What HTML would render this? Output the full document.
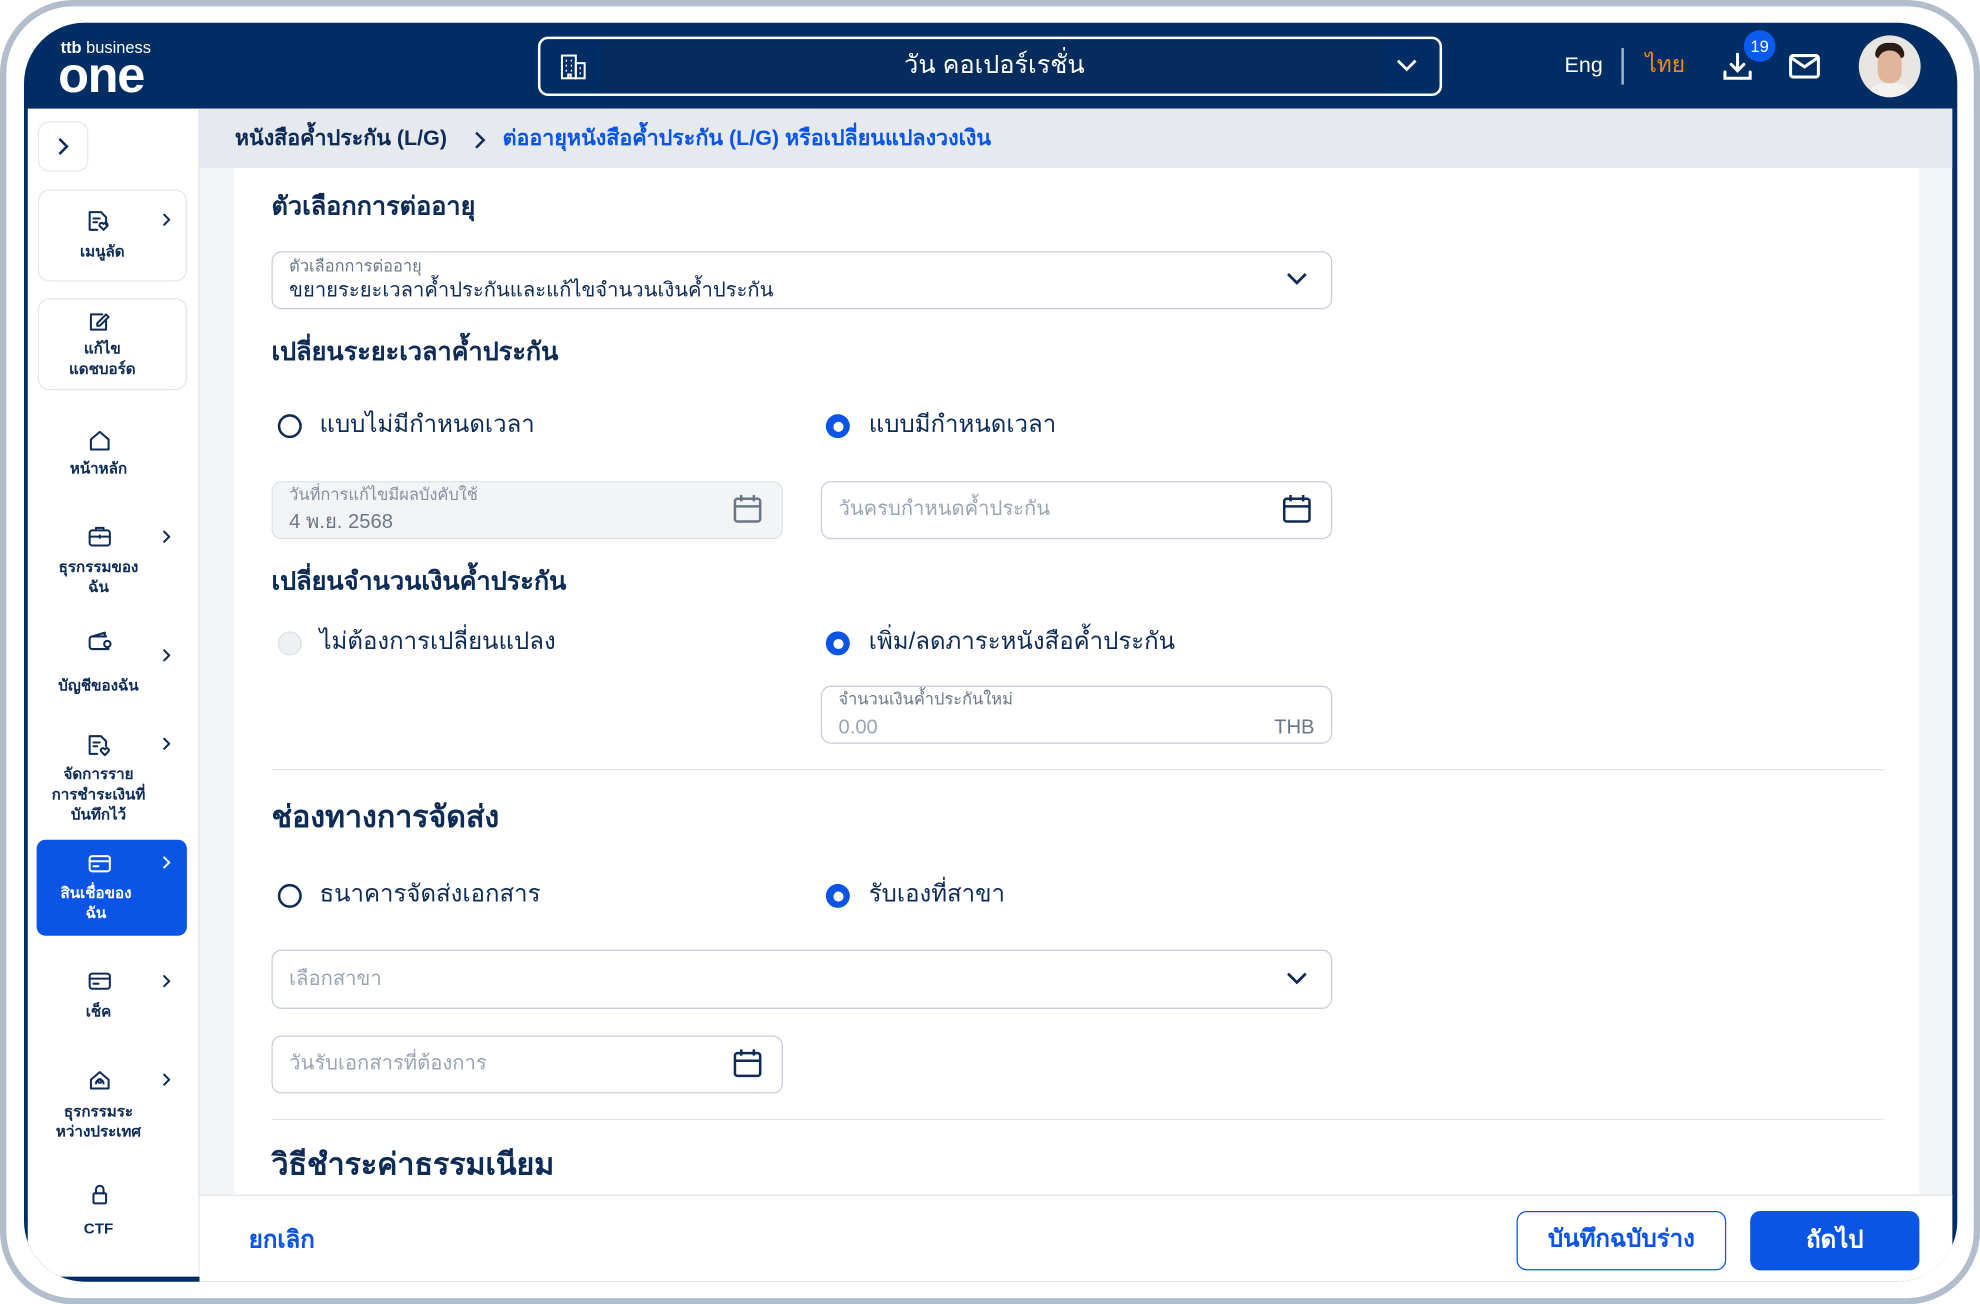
<!DOCTYPE html>
<html><head><meta charset="utf-8"><style>
*{margin:0;padding:0;box-sizing:border-box}
html,body{width:1980px;height:1304px;overflow:hidden;background:#fff}
body{font-family:"Liberation Sans","DejaVu Sans",sans-serif;color:#0d2b57}
#w{position:absolute;left:0;top:0;width:1568px;height:1033px;transform:scale(1.26276);transform-origin:0 0}
.a{position:absolute}
.outer{left:0;top:0;width:1568px;height:1033px;border:5px solid #b3becd;border-radius:58px;background:#fff}
.frame{left:19px;top:18px;width:1531px;height:997px;border-radius:48px;background:#002d63;overflow:hidden}
.t{position:absolute;white-space:nowrap;line-height:1}
.sb{position:absolute;left:3px;top:68px;width:136px;height:925px;background:#fff;border-right:1px solid #e3e7ec}
.card{position:absolute;border:1.5px solid #e3e8ef;border-radius:9px}
.lbl{position:absolute;width:100px;left:9px;text-align:center;font-size:12px;font-weight:bold;line-height:16px;color:#0d2b57}
.ico{position:absolute;left:49px}
.chev{position:absolute;left:106px}
.h{font-weight:bold;font-size:20px}
.box{position:absolute;border:1.5px solid #c6ced9;border-radius:8px;background:#fff}
.rad{position:absolute;width:19px;height:19px;border-radius:50%;border:2.5px solid #0d2b57}
.rads{position:absolute;width:19px;height:19px;border-radius:50%;background:#0a55e6}
.rads:after{content:"";position:absolute;left:5.5px;top:5.5px;width:8px;height:8px;border-radius:50%;background:#fff}
.rt{font-size:19px}
.ph{color:#9aa5b4;font-size:16px}
.sm{color:#6b7787;font-size:13px}
</style></head><body><div id="w">
<div class="a outer"></div>
<div class="a frame">
 <!-- header -->
 <div class="t" style="left:29px;top:13px;color:#fff;font-size:13px;font-weight:bold">ttb <span style="font-weight:normal">business</span></div>
 <div class="t" style="left:27px;top:22px;color:#fff;font-size:40px;font-weight:bold;letter-spacing:-1px">one</div>
 <div class="a" style="left:407px;top:11px;width:716px;height:47px;border:2px solid #fff;border-radius:8px"></div>
 <div class="a" style="left:459px;top:15px;width:617px;height:39px;background:#062c5e"></div>
 <svg class="a" style="left:424px;top:24px" width="22" height="22" viewBox="0 0 22 22" fill="none" stroke="#fff" stroke-width="1.6"><rect x="2" y="2" width="11" height="18"/><rect x="13" y="8" width="7" height="12"/><path d="M5 6h1M9 6h1M5 10h1M9 10h1M5 14h1M9 14h1M16 12h1M16 16h1M7 20v-3h2v3"/></svg>
 <div class="t" style="left:697px;top:24px;color:#fff;font-size:20px">วัน คอเปอร์เรชั่น</div>
 <svg class="a" style="left:1085px;top:26px" width="20" height="14" viewBox="0 0 20 14" fill="none" stroke="#fff" stroke-width="2.2"><path d="M3 4l7 7 7-7"/></svg>
 <div class="t" style="left:1220px;top:25px;color:#fff;font-size:17px">Eng</div>
 <div class="a" style="left:1265px;top:20px;width:2px;height:29px;background:#9fb0c8"></div>
 <div class="t" style="left:1284px;top:24px;color:#f08a1c;font-size:18px">ไทย</div>
 <svg class="a" style="left:1344px;top:22px" width="26" height="26" viewBox="0 0 26 26" fill="none" stroke="#fff" stroke-width="2.4" stroke-linecap="round"><path d="M13 3v13M8 11l5 5 5-5M3 17v5h20v-5"/></svg>
 <div class="a" style="left:1362px;top:6px;width:25px;height:25px;border-radius:50%;background:#0a5cf0;color:#fff;font-size:13px;text-align:center;line-height:25px">19</div>
 <svg class="a" style="left:1397px;top:24px" width="26" height="22" viewBox="0 0 26 22" fill="none" stroke="#fff" stroke-width="2.4"><rect x="2" y="2" width="22" height="17" rx="2"/><path d="M3 4l10 7 10-7"/></svg>
 <div class="a" style="left:1453px;top:10px;width:49px;height:49px;border-radius:50%;background:#e8e6e2;overflow:hidden"><div class="a" style="left:13px;top:6px;width:23px;height:12px;border-radius:10px 10px 3px 3px;background:#2a1d16"></div><div class="a" style="left:15px;top:12px;width:19px;height:26px;border-radius:9px;background:#e2b59a"></div><div class="a" style="left:8px;top:38px;width:33px;height:14px;border-radius:10px 10px 0 0;background:#f4f2ee"></div></div>
 <!-- sidebar -->
 <div class="sb">
  <div class="card" style="left:8px;top:10px;width:40px;height:40px"></div>
  <svg class="a" style="left:20px;top:22px" width="16" height="16" viewBox="0 0 16 16" fill="none" stroke="#0d2b57" stroke-width="2"><path d="M5 2l6 6-6 6"/></svg>
  <div class="card" style="left:8px;top:64px;width:118px;height:73px"></div>
  <div class="card" style="left:8px;top:150px;width:118px;height:73px"></div>
 </div>
 <svg width="136" height="930" class="a" style="left:3px;top:68px" fill="none" stroke="#0d2b57" stroke-width="1.6" stroke-linecap="round" stroke-linejoin="round">
  <g><path d="M49 82h9l4 4v6M49 82v14h6M52 87h5M52 90h3"/><path d="M60 96l-3-3a1.6 1.6 0 013-1.6 1.6 1.6 0 013 1.6z"/></g>
  <path d="M108 84l4 4-4 4"/>
  <g><path d="M59 163h-9v12h12v-7M55 170l7-7 2 2-7 7h-2z"/></g>
  <path d="M50 262l7-6 7 6v8h-14z"/>
  <g><rect x="49" y="334" width="16" height="12" rx="2"/><path d="M54 334v-2h6v2M49 339h16M57 338v2"/></g><path d="M108 335l4 4-4 4"/>
  <g><path d="M64 428h-13a2 2 0 01-2-2v-6a2 2 0 012-2h11M51 418l10-3v3"/><circle cx="63" cy="424" r="2.5"/></g><path d="M108 429l4 4-4 4"/>
  <g><path d="M49 497h9l4 4v4M49 497v14h6M52 502h5M52 505h3"/><path d="M61 512l-3-3a1.6 1.6 0 013-1.6 1.6 1.6 0 013 1.6z"/></g><path d="M108 499l4 4-4 4"/>
  <g><rect x="49" y="685" width="16" height="12" rx="2"/><path d="M49 689h16M52 693h4"/></g><path d="M108 687l4 4-4 4"/>
  <g><path d="M50 769l7-6 7 6v7h-14zM54 772a3 3 0 016 0"/><circle cx="57" cy="770" r="1.5"/></g><path d="M108 765l4 4-4 4"/>
  <g><rect x="52" y="859" width="10" height="8" rx="1"/><path d="M54 859v-3a3 3 0 016 0v3"/></g>
 </svg>
 <div class="a" style="left:10px;top:647px;width:119px;height:76px;background:#0a55e6;border-radius:7px"></div>
 <svg class="a" style="left:3px;top:68px" width="136" height="720" fill="none" stroke="#fff" stroke-width="1.6" stroke-linecap="round"><rect x="49" y="592" width="16" height="12" rx="2"/><path d="M49 596h16M52 600h4M108 593l4 4-4 4"/></svg>
 <div class="lbl" style="left:12px;top:173px">เมนูลัด</div>
 <div class="lbl" style="left:12px;top:250px">แก้ไข<br>แดชบอร์ด</div>
 <div class="lbl" style="left:9px;top:345px">หน้าหลัก</div>
 <div class="lbl" style="left:9px;top:423px">ธุรกรรมของ<br>ฉัน</div>
 <div class="lbl" style="left:9px;top:517px">บัญชีของฉัน</div>
 <div class="lbl" style="left:9px;top:587px">จัดการราย<br>การชำระเงินที่<br>บันทึกไว้</div>
 <div class="lbl" style="left:7px;top:681px;color:#fff">สินเชื่อของ<br>ฉัน</div>
 <div class="lbl" style="left:9px;top:775px">เช็ค</div>
 <div class="lbl" style="left:9px;top:854px">ธุรกรรมระ<br>หว่างประเทศ</div>
 <div class="lbl" style="left:9px;top:947px">CTF</div>
 <!-- main -->
 <div class="a" style="left:139px;top:68px;width:1388px;height:925px;background:#f3f5f7"></div>
 <div class="a" style="left:139px;top:68px;width:1388px;height:47px;background:#e6eaef"></div>
 <div class="t" style="left:167px;top:83px;font-size:17px;font-weight:bold">หนังสือค้ำประกัน (L/G)</div>
 <svg class="a" style="left:355px;top:85px" width="12" height="16" fill="none" stroke="#0d2b57" stroke-width="2"><path d="M3 2l6 6-6 6"/></svg>
 <div class="t" style="left:379px;top:83px;font-size:17px;font-weight:bold;color:#0a55e6">ต่ออายุหนังสือค้ำประกัน (L/G) หรือเปลี่ยนแปลงวงเงิน</div>
 <div class="a" style="left:167px;top:115px;width:1334px;height:820px;background:#fff"></div>
 <div class="t h" style="left:196px;top:136px">ตัวเลือกการต่ออายุ</div>
 <div class="box" style="left:196px;top:181px;width:840px;height:46px"></div>
 <div class="t sm" style="left:210px;top:186px">ตัวเลือกการต่ออายุ</div>
 <div class="t" style="left:210px;top:205px;font-size:16px">ขยายระยะเวลาค้ำประกันและแก้ไขจำนวนเงินค้ำประกัน</div>
 <svg class="a" style="left:998px;top:196px" width="20" height="14" fill="none" stroke="#0d2b57" stroke-width="2.2"><path d="M3 3l7 7 7-7"/></svg>
 <div class="t h" style="left:196px;top:251px">เปลี่ยนระยะเวลาค้ำประกัน</div>
 <div class="rad" style="left:201px;top:310px"></div><div class="t rt" style="left:234px;top:309px">แบบไม่มีกำหนดเวลา</div>
 <div class="rads" style="left:635px;top:310px"></div><div class="t rt" style="left:669px;top:309px">แบบมีกำหนดเวลา</div>
 <div class="box" style="left:196px;top:363px;width:405px;height:46px;background:#f3f4f6;border-color:#dde2e8"></div>
 <div class="t sm" style="left:210px;top:367px;color:#8590a0">วันที่การแก้ไขมีผลบังคับใช้</div>
 <div class="t" style="left:210px;top:388px;font-size:16px;color:#6b7787">4 พ.ย. 2568</div>
 <div class="box" style="left:631px;top:363px;width:405px;height:46px"></div>
 <div class="t ph" style="left:645px;top:378px">วันครบกำหนดค้ำประกัน</div>
 <div class="t h" style="left:196px;top:433px">เปลี่ยนจำนวนเงินค้ำประกัน</div>
 <div class="a" style="left:201px;top:482px;width:19px;height:19px;border-radius:50%;background:#eef0f3;border:1.5px solid #dde2e8"></div><div class="t rt" style="left:234px;top:481px">ไม่ต้องการเปลี่ยนแปลง</div>
 <div class="rads" style="left:635px;top:482px"></div><div class="t rt" style="left:669px;top:481px">เพิ่ม/ลดภาระหนังสือค้ำประกัน</div>
 <div class="box" style="left:631px;top:525px;width:405px;height:46px"></div>
 <div class="t sm" style="left:645px;top:529px">จำนวนเงินค้ำประกันใหม่</div>
 <div class="t" style="left:645px;top:551px;font-size:16px;color:#9aa5b4">0.00</div>
 <div class="t" style="left:990px;top:551px;font-size:16px;color:#6b7787">THB</div>
 <div class="a" style="left:196px;top:591px;width:1277px;height:1px;background:#e1e5ea"></div>
 <div class="t" style="left:196px;top:618px;font-size:24px;font-weight:bold">ช่องทางการจัดส่ง</div>
 <div class="rad" style="left:201px;top:682px"></div><div class="t rt" style="left:234px;top:681px">ธนาคารจัดส่งเอกสาร</div>
 <div class="rads" style="left:635px;top:682px"></div><div class="t rt" style="left:669px;top:681px">รับเองที่สาขา</div>
 <div class="box" style="left:196px;top:734px;width:840px;height:47px"></div>
 <div class="t ph" style="left:210px;top:750px">เลือกสาขา</div>
 <svg class="a" style="left:998px;top:750px" width="20" height="14" fill="none" stroke="#0d2b57" stroke-width="2.2"><path d="M3 3l7 7 7-7"/></svg>
 <div class="box" style="left:196px;top:802px;width:405px;height:46px"></div>
 <div class="t ph" style="left:210px;top:817px">วันรับเอกสารที่ต้องการ</div>
 <div class="a" style="left:196px;top:868px;width:1277px;height:1px;background:#e1e5ea"></div>
 <div class="t" style="left:196px;top:893px;font-size:24px;font-weight:bold">วิธีชำระค่าธรรมเนียม</div>
 <svg class="a" style="left:0;top:0" width="1100" height="850" fill="none" stroke-width="2" stroke-linejoin="round">
  <g stroke="#6b7787"><rect x="563" y="377" width="20" height="18" rx="2"/><path d="M563 383h20M568 374v5M578 374v5"/></g>
  <g stroke="#0d2b57"><rect x="998" y="377" width="20" height="18" rx="2"/><path d="M998 383h20M1003 374v5M1013 374v5"/></g>
  <g stroke="#0d2b57"><rect x="563" y="816" width="20" height="18" rx="2"/><path d="M563 822h20M568 813v5M578 813v5"/></g>
 </svg>
 <!-- footer -->
 <div class="a" style="left:139px;top:928px;width:1388px;height:70px;background:#fff;border-top:1px solid #e1e5ea"></div>
 <div class="t" style="left:178px;top:955px;font-size:19px;font-weight:bold;color:#0a55e6">ยกเลิก</div>
 <div class="a" style="left:1182px;top:941px;width:166px;height:47px;border:1.5px solid #0a55e6;border-radius:8px;color:#0a55e6;font-size:19px;font-weight:bold;text-align:center;line-height:44px">บันทึกฉบับร่าง</div>
 <div class="a" style="left:1367px;top:941px;width:134px;height:47px;background:#0a55e6;border-radius:8px;color:#fff;font-size:19px;font-weight:bold;text-align:center;line-height:47px">ถัดไป</div>
</div>
</div></body></html>
